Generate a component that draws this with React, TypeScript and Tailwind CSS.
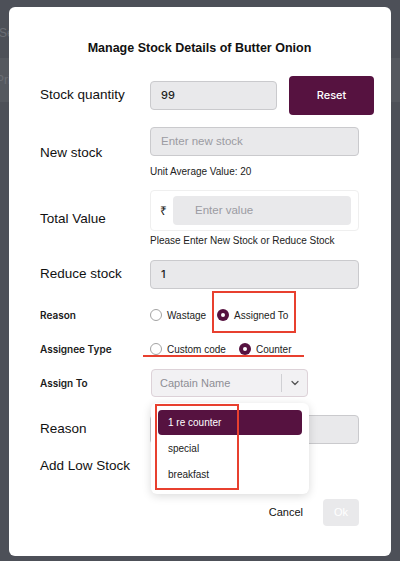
import { ChevronDown } from "lucide-react";

const inter = "font-['Inter',sans-serif]";

function Radio({ label, checked }: { label: string; checked?: boolean }) {
  return (
    <span className="flex items-center gap-[5px]">
      {checked ? (
        <span className="flex h-[12px] w-[12px] items-center justify-center rounded-full bg-[#561240]">
          <span className="h-[4px] w-[4px] rounded-full bg-white" />
        </span>
      ) : (
        <span className="h-[12px] w-[12px] rounded-full border border-[#a3a3a3] bg-white" />
      )}
      <span className="text-[10px] text-[#222]">{label}</span>
    </span>
  );
}

function Field({ value, placeholder, className = "" }: { value?: string; placeholder?: string; className?: string }) {
  return (
    <div
      className={`flex h-[29px] shrink-0 items-center rounded-[4px] border border-[#cacacd] bg-[#e9e9eb] px-[10px] text-[11.5px] ${className}`}
    >
      {value ? (
        <span className={`${inter} text-[11px] font-medium text-[#222]`}>{value}</span>
      ) : (
        <span className="text-[#9b9ba2]">{placeholder}</span>
      )}
    </div>
  );
}

const bigLabel = "w-[110px] shrink-0 text-[13.5px] text-[#111]";
const smallLabel = `w-[110px] shrink-0 ${inter} text-[10px] font-semibold text-[#1a1a1a]`;

export default function App() {
  return (
    <div
      className="relative h-[561px] w-[400px] overflow-hidden bg-[#4d5058]"
      style={{ fontFamily: "'Liberation Sans', Arial, sans-serif" }}
    >
      {/* dimmed page behind the dialog */}
      <div className="flex h-[58px] items-center pt-[8px] text-[12px] text-[#6b6e75]">
        <span className="-ml-[1px]">Search</span>
      </div>
      <div className="flex h-[44px] items-center bg-[#55585f] text-[12px] text-[#6b6e75]">
        <span className="-ml-[4px]">Price</span>
      </div>

      <div className="absolute left-[9px] top-[7px] h-[549px] w-[382px] rounded-[6px] bg-white pl-[31px] pr-[32px] pt-[31px]">
        <h1 className="text-center text-[12.5px] font-bold leading-[20px] text-[#111]">
          Manage Stock Details of Butter Onion
        </h1>

        <div className="mt-[18px] flex h-[39px] items-center">
          <div className={bigLabel}>Stock quantity</div>
          <Field value="99" className="w-[127px]" />
          <button
            className={`ml-[12px] h-[39px] w-[85px] shrink-0 rounded-[4px] bg-[#561240] ${inter} text-[11px] font-medium text-white`}
          >
            Reset
          </button>
        </div>

        <div className="mt-[12px] flex items-center">
          <div className={bigLabel}>New stock</div>
          <div className="flex-1">
            <Field placeholder="Enter new stock" />
            <div className="mt-[8px] text-[10px] leading-[16px] text-[#222]">Unit Average Value: 20</div>
          </div>
        </div>

        <div className="mt-[10px] flex items-center">
          <div className={bigLabel}>Total Value</div>
          <div className="flex-1">
            <div className="flex h-[41px] items-center rounded-[4px] border border-[#efefef] pl-[9px] pr-[7px]">
              <span className="w-[13px] text-[12px] text-[#111]">₹</span>
              <div className="flex h-[29px] flex-1 items-center rounded-[4px] bg-[#e9e9eb] pl-[22px] text-[11.5px] text-[#9b9ba2]">
                Enter value
              </div>
            </div>
            <div className="mt-[2px] text-[10px] leading-[16px] text-[#222]">Please Enter New Stock or Reduce Stock</div>
          </div>
        </div>

        <div className="mt-[11px] flex items-center">
          <div className={bigLabel}>Reduce stock</div>
          <Field value="1" className="flex-1" />
        </div>

        <div className="mt-[16px] flex h-[20px] items-center">
          <div className={smallLabel}>Reason</div>
          <div className="flex items-center gap-[11px]">
            <Radio label="Wastage" />
            <span className="relative">
              <Radio label="Assigned To" checked />
              <span className="absolute -bottom-[10px] -left-[5px] -right-[8px] -top-[17px] border-2 border-[#e8402f]" />
            </span>
          </div>
        </div>

        <div className="relative mt-[14px] flex h-[20px] items-center">
          <div className={smallLabel}>Assignee Type</div>
          <div className="flex items-center gap-[13px]">
            <Radio label="Custom code" />
            <Radio label="Counter" checked />
          </div>
          <span className="absolute left-[103px] top-[16px] h-[2px] w-[161px] bg-[#e8402f]" />
        </div>

        <div className="mt-[10px] flex items-center">
          <div className={`${smallLabel} w-[111px]`}>Assign To</div>
          <div className="relative">
            <div className="flex h-[28px] w-[157px] items-center rounded-[4px] border border-[#ddd2d8] bg-[#f2f1f3] pl-[8px] text-[11px] text-[#8e8e95]">
              <span className="flex-1">Captain Name</span>
              <span className="h-[18px] w-px bg-[#d0d0d4]" />
              <span className="flex w-[25px] justify-center text-[#555]">
                <ChevronDown size={12} strokeWidth={2.5} />
              </span>
            </div>
            <div className="absolute left-0 top-[34px] z-10 w-[158px] rounded-[6px] bg-white px-[7px] py-[7px] shadow-[0_2px_10px_rgba(0,0,0,0.15)]">
              <div className="flex h-[25px] items-center rounded-[4px] bg-[#561240] pl-[10px] text-[10px] text-white">
                1 re counter
              </div>
              <div className="flex h-[26px] items-center pl-[10px] text-[10px] text-[#222]">special</div>
              <div className="flex h-[26px] items-center pl-[10px] text-[10px] text-[#222]">breakfast</div>
              <span className="absolute left-[4px] top-[1px] h-[86px] w-[84px] border-2 border-[#e8402f]" />
            </div>
          </div>
        </div>

        <div className="mt-[18px] flex items-center">
          <div className={bigLabel}>Reason</div>
          <Field className="flex-1" />
        </div>

        <div className="mt-[12px] flex h-[20px] items-center">
          <div className={bigLabel}>Add Low Stock</div>
        </div>

        <div className="mt-[23px] flex items-center justify-end gap-[20px]">
          <button className="text-[11px] text-[#111]">Cancel</button>
          <button className="h-[27px] w-[36px] rounded-[4px] bg-[#e9e9eb] text-[11px] text-white">Ok</button>
        </div>
      </div>
    </div>
  );
}
